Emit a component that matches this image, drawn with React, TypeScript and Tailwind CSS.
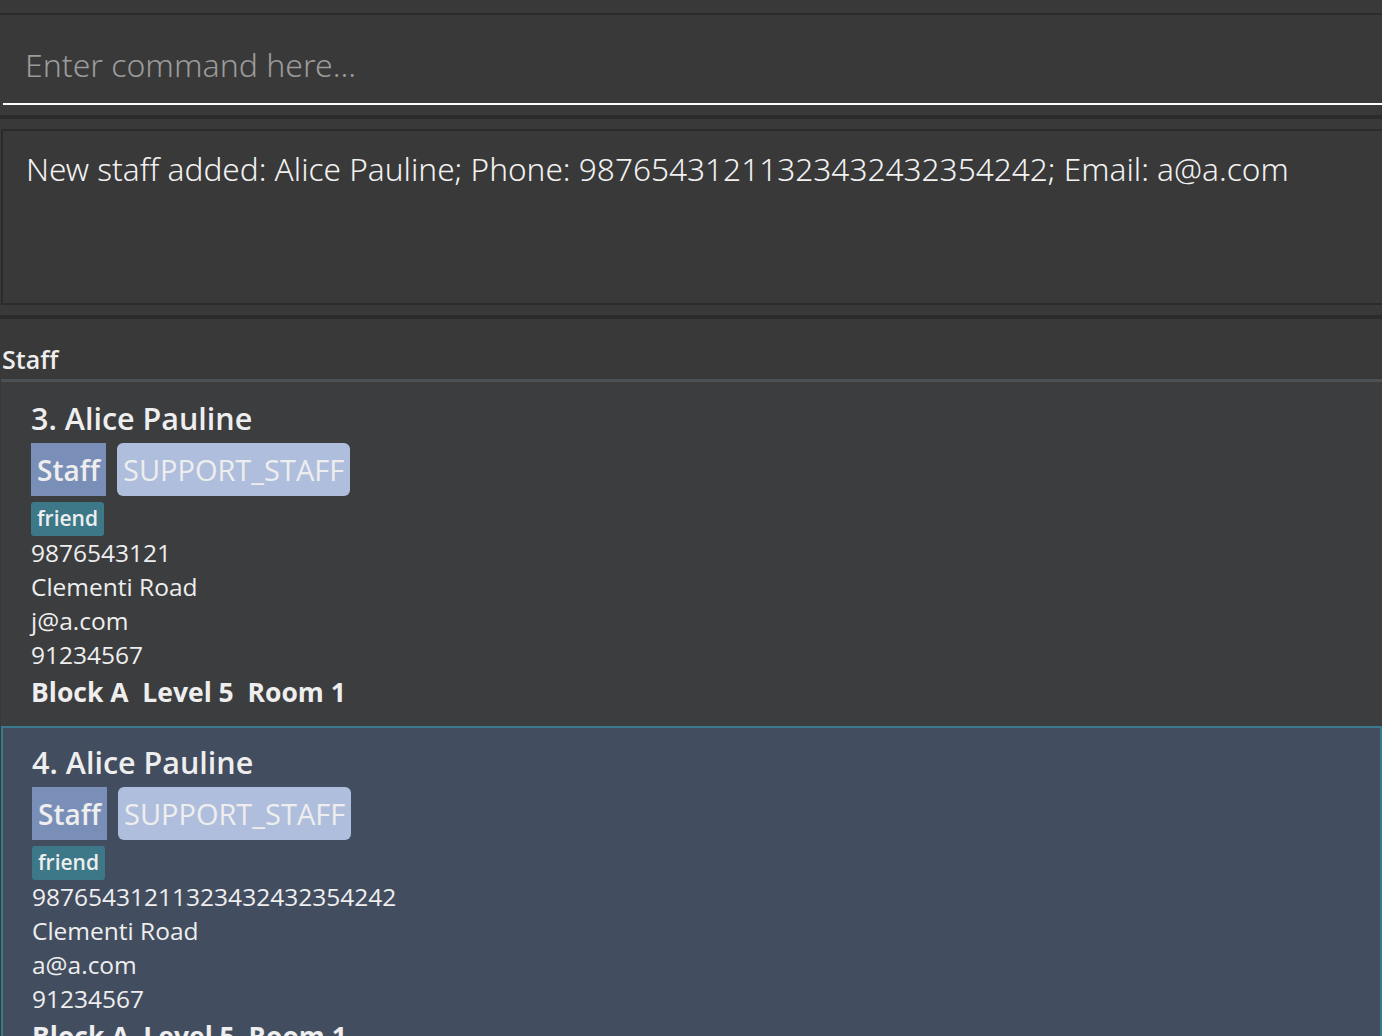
import React from 'react';

type Person = {
  index: number;
  name: string;
  phone: string;
  address: string;
  email: string;
  emergency: string;
  selected?: boolean;
};

const people: Person[] = [
  { index: 3, name: 'Alice Pauline', phone: '9876543121', address: 'Clementi Road', email: 'j@a.com', emergency: '91234567' },
  { index: 4, name: 'Alice Pauline', phone: '98765431211323432432354242', address: 'Clementi Road', email: 'a@a.com', emergency: '91234567', selected: true },
];

const font = { fontFamily: '"Open Sans", "Noto Sans", sans-serif' };
const light = { fontFamily: '"Noto Sans", "Open Sans", sans-serif' };

function PersonCard({ p }: { p: Person }) {
  return (
    <div
      className={
        p.selected
          ? 'h-[344px] shrink-0 border-2 border-[#3a7a8c] bg-[#424d5f] pl-[29px] pt-[14px]'
          : 'h-[344px] shrink-0 border-2 border-transparent bg-[#3c3d3f] pl-[28px] pt-[14px]'
      }
    >
      <div className="text-[30.5px] font-semibold leading-[40px] text-[#eeeeee]">
        {p.index}. {p.name}
      </div>
      <div className="mt-[5px] flex gap-[11px]">
        <span className="flex h-[53px] items-center bg-[#7a8fb8] px-[6px] text-[28px] font-semibold text-[#eeeeee]">
          Staff
        </span>
        <span className="flex h-[53px] items-center rounded-[6px] bg-[#b0bedd] px-[6px] text-[29px] text-[#eeeeee]">
          SUPPORT_STAFF
        </span>
      </div>
      <div className="mt-[6px] flex">
        <span className="flex h-[34px] items-center rounded-[3px] bg-[#3c7888] px-[6px] text-[21px] font-semibold text-[#eeeeee]">
          friend
        </span>
      </div>
      <div className="text-[24.5px] leading-[34px] text-[#eeeeee]">
        <div>{p.phone}</div>
        <div>{p.address}</div>
        <div>{p.email}</div>
        <div>{p.emergency}</div>
      </div>
      <div className="text-[26.5px] font-bold leading-[40px] text-[#eeeeee]">
        Block A&nbsp; Level 5&nbsp; Room 1
      </div>
    </div>
  );
}

export default function App() {
  return (
    <div className="flex h-[1036px] w-[1382px] flex-col overflow-hidden bg-[#393939]" style={font}>
      <div className="h-[13px] shrink-0" />
      <div className="h-[2px] shrink-0 bg-[#2b2b2b]" />

      {/* command box */}
      <div className="flex h-[88px] shrink-0 items-center pl-[25px] pt-[12px]">
        <span className="text-[32px] font-light text-[#9b9b9b]" style={light}>
          Enter command here...
        </span>
      </div>
      <div className="ml-[3px] h-[2px] shrink-0 bg-white" />
      <div className="h-[10px] shrink-0" />
      <div className="h-[4px] shrink-0 bg-[#2b2b2b]" />
      <div className="h-[10px] shrink-0" />

      {/* result display */}
      <div className="ml-[1px] h-[176px] shrink-0 border-2 border-r-0 border-[#2b2b2b] pl-[23px] pt-[14px]">
        <span className="text-[31.6px] font-light text-[#f2f2f2]" style={light}>
          New staff added: Alice Pauline; Phone: 98765431211323432432354242; Email: a@a.com
        </span>
      </div>
      <div className="h-[10px] shrink-0" />
      <div className="h-[4px] shrink-0 bg-[#2b2b2b]" />

      {/* staff list */}
      <div className="flex h-[60px] shrink-0 items-end pb-[4px] pl-[2px]">
        <span className="text-[25px] font-semibold leading-[32px] text-[#eeeeee]">Staff</span>
      </div>
      <div className="ml-[1px] h-[3px] shrink-0 bg-[#4b5155]" />
      <div className="flex flex-col pl-[1px]">
        {people.map((p) => (
          <PersonCard key={p.index} p={p} />
        ))}
      </div>
    </div>
  );
}
